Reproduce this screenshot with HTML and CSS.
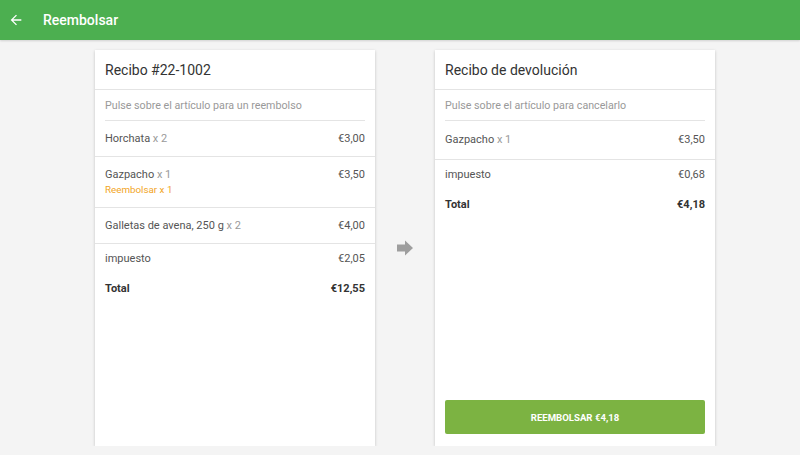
FILE: index.html
```html
<!DOCTYPE html>
<html lang="es">
<head>
    <meta charset="UTF-8">
    <meta name="viewport" content="width=device-width, initial-scale=1.0">
    <title>Reembolsar</title>
    <link rel="stylesheet" href="styles.css">
</head>
<body>
    <header class="topbar">
        <svg class="back-icon" viewBox="0 0 24 24" width="16" height="16">
            <path d="M20 11H7.83l5.59-5.59L12 4l-8 8 8 8 1.41-1.41L7.83 13H20v-2z" fill="#fff"/>
        </svg>
        <span class="topbar-title">Reembolsar</span>
    </header>

    <main class="content">
        <section class="card">
            <div class="card-title">Recibo #22-1002</div>
            <div class="card-hint">Pulse sobre el artículo para un reembolso</div>
            <div class="item">
                <span>Horchata <span class="qty">x 2</span></span>
                <span>€3,00</span>
            </div>
            <div class="item">
                <div>
                    <div>Gazpacho <span class="qty">x 1</span></div>
                    <div class="refund-note">Reembolsar x 1</div>
                </div>
                <span>€3,50</span>
            </div>
            <div class="item">
                <span>Galletas de avena, 250 g <span class="qty">x 2</span></span>
                <span>€4,00</span>
            </div>
            <div class="summary">
                <div class="summary-row">
                    <span>impuesto</span>
                    <span>€2,05</span>
                </div>
                <div class="summary-row total">
                    <span>Total</span>
                    <span>€12,55</span>
                </div>
            </div>
        </section>

        <div class="arrow">
            <svg viewBox="0 0 24 24" width="24" height="24">
                <path d="M12 8.5V4.5l8 7.5-8 7.5v-4H4v-7z" fill="#9e9e9e"/>
            </svg>
        </div>

        <section class="card">
            <div class="card-title">Recibo de devolución</div>
            <div class="card-hint">Pulse sobre el artículo para cancelarlo</div>
            <div class="item tall">
                <span>Gazpacho <span class="qty">x 1</span></span>
                <span>€3,50</span>
            </div>
            <div class="summary">
                <div class="summary-row">
                    <span>impuesto</span>
                    <span>€0,68</span>
                </div>
                <div class="summary-row total">
                    <span>Total</span>
                    <span>€4,18</span>
                </div>
            </div>
            <button class="refund-btn">REEMBOLSAR €4,18</button>
        </section>
    </main>
</body>
</html>
```

FILE: styles.css
```css
body {
    font-family: Roboto, "Noto Sans", sans-serif;
    margin: 0;
    padding: 0;
    background: #f4f4f4;
    color: #555;
}
.topbar {
    height: 40px;
    background: #4caf50;
    display: flex;
    align-items: center;
    padding-left: 8px;
    box-shadow: 0 1px 2px rgba(0, 0, 0, 0.15);
}
.back-icon {
    display: block;
}
.topbar-title {
    color: #fff;
    font-size: 14px;
    font-weight: 500;
    margin-left: 19px;
}
.content {
    display: flex;
    align-items: stretch;
    padding: 10px 0 0 95px;
}
.card {
    width: 280px;
    height: 396px;
    background: #fff;
    box-shadow: 0 1px 3px rgba(0, 0, 0, 0.2);
    display: flex;
    flex-direction: column;
    font-size: 11px;
}
.card-title {
    height: 39px;
    line-height: 41px;
    padding: 0 10px;
    font-size: 14px;
    color: #333;
    border-bottom: 1px solid #e4e4e4;
}
.card-hint {
    margin: 0 10px;
    height: 30px;
    line-height: 31px;
    font-size: 10.7px;
    color: #999;
    border-bottom: 1px solid #e4e4e4;
}
.item {
    display: flex;
    justify-content: space-between;
    align-items: flex-start;
    padding: 11px 10px 10px;
    line-height: 14px;
    border-bottom: 1px solid #e4e4e4;
}
.item.tall {
    padding: 12px 10px 12px;
}
.qty {
    color: #9a9a9a;
}
.refund-note {
    color: #f2a51f;
    font-size: 9.8px;
    margin-top: 1px;
}
.summary {
    padding-top: 0;
}
.summary-row {
    display: flex;
    justify-content: space-between;
    padding: 8px 10px;
    line-height: 14px;
}
.summary-row.total {
    font-weight: bold;
    color: #333;
}
.arrow {
    width: 60px;
    display: flex;
    align-items: center;
    justify-content: center;
}
.refund-btn {
    margin: auto 10px 12px;
    height: 34px;
    border: none;
    border-radius: 2px;
    background: #7cb342;
    color: #fff;
    font-family: Roboto, sans-serif;
    font-size: 9.6px;
    font-weight: bold;
    cursor: pointer;
}
```
